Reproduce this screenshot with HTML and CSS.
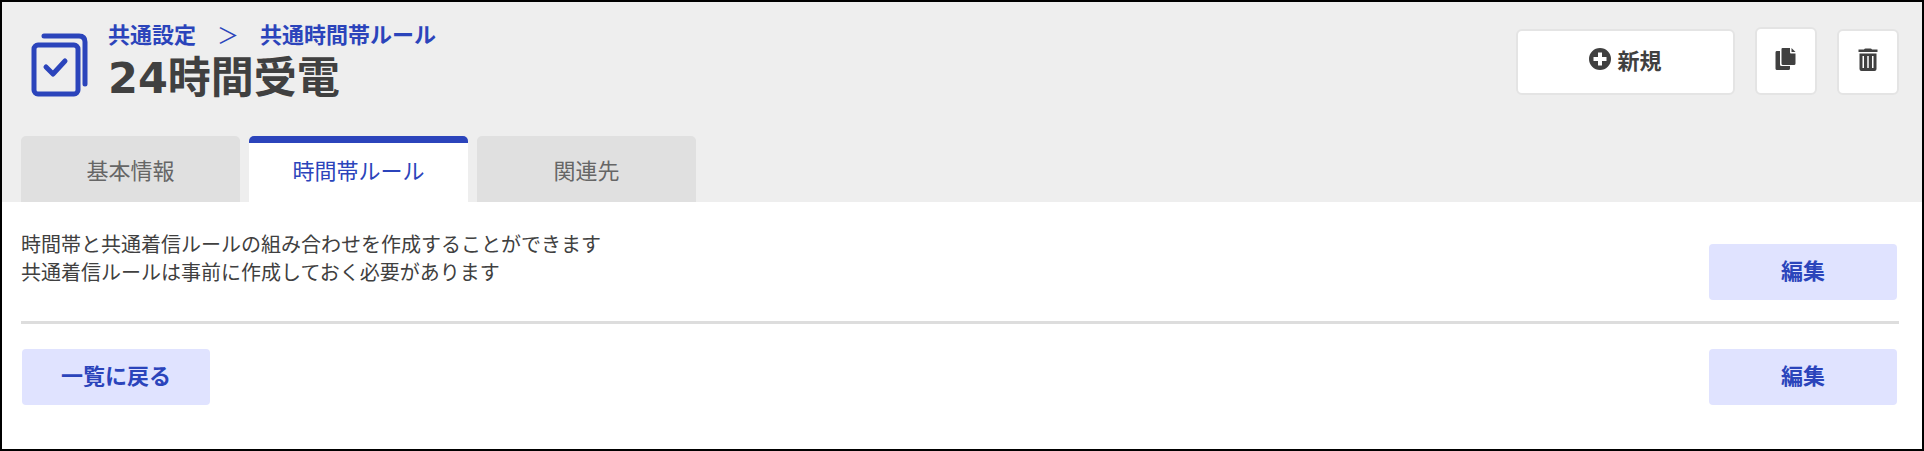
FILE: index.html
```html
<!DOCTYPE html>
<html lang="ja">
<head>
    <meta charset="UTF-8">
    <meta name="viewport" content="width=device-width, initial-scale=1.0">
    <title>24時間受電</title>
    <link rel="stylesheet" href="styles.css">
</head>
<body>
    <header class="page-header">
        <div class="header-top">
            <div class="heading">
                <svg class="page-icon" viewBox="0 0 58 64" fill="none" stroke="currentColor" stroke-width="5" stroke-linecap="round" stroke-linejoin="round" aria-hidden="true">
                    <rect x="3" y="12" width="44" height="49" rx="4"/>
                    <path d="M13 3H48Q54 3 54 9V51"/>
                    <path d="M15 34L22 41L34 28"/>
                </svg>
                <div>
                    <nav class="breadcrumb">
                        <a href="#">共通設定</a>
                        <span>＞</span>
                        <a href="#">共通時間帯ルール</a>
                    </nav>
                    <h1>24時間受電</h1>
                </div>
            </div>
            <div class="actions">
                <button type="button" class="btn btn-new">
                    <svg viewBox="0 0 22 22" aria-hidden="true">
                        <path fill="currentColor" fill-rule="evenodd" d="M11 0a11 11 0 1 0 0 22a11 11 0 1 0 0-22zM9 4.500h4V9h4.500v4H13v4.500H9V13H4.500V9H9z"/>
                    </svg>
                    新規
                </button>
                <button type="button" class="btn btn-icon btn-copy" aria-label="コピー">
                    <svg viewBox="0 0 22 24" aria-hidden="true">
                        <path fill="currentColor" d="M1.500 4H5V17.500Q5 19 6.500 19H15V21.500Q15 23 13.500 23H2Q.5 23 .5 21.500V5.500Q.5 4 1.500 4z"/>
                        <path fill="currentColor" d="M7.500 1H15V5.500Q15 6.500 16 6.500H20.500V16.500Q20.500 18 19 18H8Q6.500 18 6.500 16.500V2Q6.500 1 7.500 1zM16.500 1L20.500 5H16.500z"/>
                    </svg>
                </button>
                <button type="button" class="btn btn-icon" aria-label="削除">
                    <svg viewBox="0 0 22 24" aria-hidden="true">
                        <path fill="currentColor" d="M7 1.500Q7.500.5 8.500.5H13.500Q14.500.5 15 1.500H20.500V4H1.500V1.500z"/>
                        <path fill="currentColor" fill-rule="evenodd" d="M2.500 5.500H19.500V21Q19.500 23 17.500 23H4.500Q2.500 23 2.500 21zM5.500 8V20H7V8zM10.250 8V20H11.750V8zM15 8V20H16.500V8z"/>
                    </svg>
                </button>
            </div>
        </div>
        <nav class="tabs">
            <a href="#" class="tab">基本情報</a>
            <a href="#" class="tab active">時間帯ルール</a>
            <a href="#" class="tab">関連先</a>
        </nav>
    </header>
    <main>
        <section class="rule-info">
            <p>時間帯と共通着信ルールの組み合わせを作成することができます<br>共通着信ルールは事前に作成しておく必要があります</p>
            <button type="button" class="btn btn-sub">編集</button>
        </section>
        <div class="footer-buttons">
            <button type="button" class="btn btn-sub">一覧に戻る</button>
            <button type="button" class="btn btn-sub">編集</button>
        </div>
    </main>
</body>
</html>
```
FILE: styles.css
```css
* {
    margin: 0;
    padding: 0;
    box-sizing: border-box;
}

body {
    font-family: "Noto Sans CJK JP", sans-serif;
    font-size: 22px;
    color: #404040;
    background: #fff;
    border: 2px solid #000;
    min-height: 100vh;
}

a {
    color: inherit;
    text-decoration: none;
}

.page-header {
    background: #eee;
    padding: 18px 23px 0 19px;
}

.header-top {
    display: flex;
    justify-content: space-between;
    align-items: flex-start;
}

.heading {
    display: flex;
    gap: 19px;
    padding-left: 10px;
}

.page-icon {
    width: 58px;
    height: 64px;
    margin-top: 13px;
    color: #2b44bb;
}

.breadcrumb {
    display: flex;
    gap: 21px;
    line-height: 26px;
    font-weight: 700;
    color: #2b44bb;
}

.breadcrumb span {
    font-weight: 400;
}

h1 {
    font-family: "DejaVu Sans", "Noto Sans CJK JP", sans-serif;
    font-size: 43px;
    line-height: 64px;
}

.actions {
    display: flex;
    align-items: flex-end;
    gap: 20px;
    padding-top: 7px;
}

.btn {
    display: flex;
    justify-content: center;
    align-items: center;
    gap: 6px;
    height: 66px;
    padding-bottom: 7px;
    font-family: inherit;
    font-size: 22px;
    font-weight: 700;
    color: #404040;
    background: #fff;
    border: 2px solid #e4e4e4;
    border-radius: 6px;
    cursor: pointer;
}

.btn svg {
    width: 22px;
    height: 24px;
}

.btn-new {
    width: 219px;
}

.btn-icon {
    width: 62px;
    padding-bottom: 4px;
}

.btn-copy {
    height: 68px;
}

.tabs {
    display: flex;
    gap: 9px;
    margin-top: 26px;
}

.tab {
    width: 219px;
    height: 66px;
    line-height: 52px;
    text-align: center;
    color: #666;
    background: #e0e0e0;
    border-top: 7px solid #e0e0e0;
    border-radius: 5px 5px 0 0;
}

.tab.active {
    color: #2b44bb;
    background: #fff;
    border-top-color: #2b44bb;
}

main {
    padding: 28px 23px 0 19px;
}

.rule-info {
    display: flex;
    justify-content: space-between;
    align-items: flex-end;
    padding: 0 2px 21px 0;
    border-bottom: 3px solid #ddd;
}

.rule-info p {
    align-self: flex-start;
    font-size: 20px;
    line-height: 28px;
}

.rule-info .btn {
    margin-top: 14px;
}

.footer-buttons {
    display: flex;
    justify-content: space-between;
    padding: 25px 2px 20px 1px;
}

.btn-sub {
    width: 188px;
    height: 56px;
    color: #2b44bb;
    background: #e0e3ff;
    border: none;
    border-radius: 4px;
}
```
